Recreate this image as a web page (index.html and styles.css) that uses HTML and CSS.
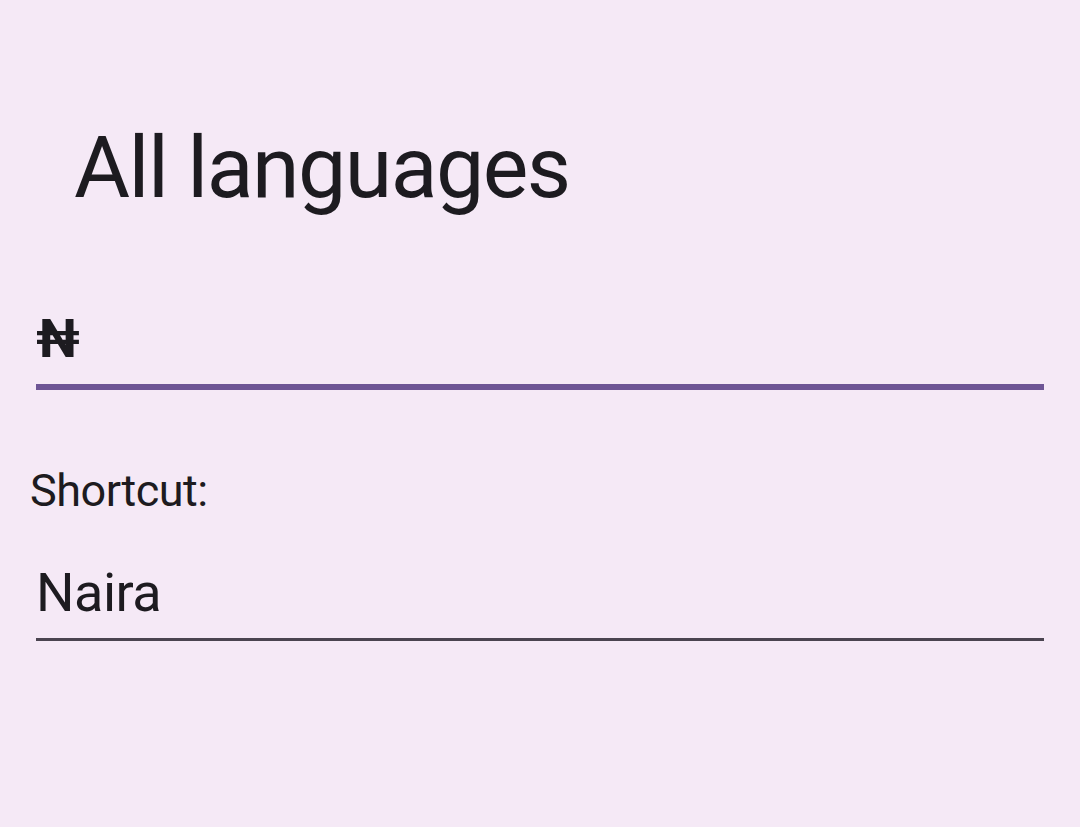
FILE: index.html
```html
<!DOCTYPE html>
<html lang="en">
<head>
    <meta charset="UTF-8">
    <meta name="viewport" content="width=device-width, initial-scale=1.0">
    <title>All languages</title>
    <link rel="stylesheet" href="styles.css">
</head>
<body>
    <h1 class="title">All languages</h1>

    <div class="field field-active">
        <input class="field-input symbol" type="text" value="₦">
    </div>

    <label class="shortcut-label" for="shortcut">Shortcut:</label>
    <div class="field">
        <input class="field-input" id="shortcut" type="text" value="Naira">
    </div>
</body>
</html>
```

FILE: styles.css
```css
body {
    font-family: Roboto, "Noto Sans", sans-serif;
    background-color: #f5e9f6;
    color: #1d1b20;
    margin: 0;
    padding: 0 36px 0 30px;
    box-sizing: border-box;
    min-height: 100vh;
}
.title {
    font-size: 86px;
    font-weight: 400;
    margin: 0;
    padding: 118px 0 0 44px;
    line-height: 100px;
    letter-spacing: -1.5px;
}
.field {
    margin-left: 6px;
    border-bottom: 3px solid #4a4450;
}
.field-active {
    margin-top: 90px;
    border-bottom: 6px solid #6e5595;
}
.field-input {
    display: block;
    box-sizing: border-box;
    width: 100%;
    border: none;
    outline: none;
    background: transparent;
    color: #1d1b20;
    font-family: Roboto, "Noto Sans", sans-serif;
    font-size: 54px;
    padding: 0;
    margin: 0;
}
.symbol {
    font-weight: 700;
    height: 76px;
    padding-bottom: 15px;
}
.shortcut-label {
    display: block;
    font-size: 45px;
    letter-spacing: -0.5px;
    margin-top: 71px;
    line-height: 60px;
}
#shortcut {
    height: 91px;
    margin-top: 26px;
    letter-spacing: -0.5px;
}
```
